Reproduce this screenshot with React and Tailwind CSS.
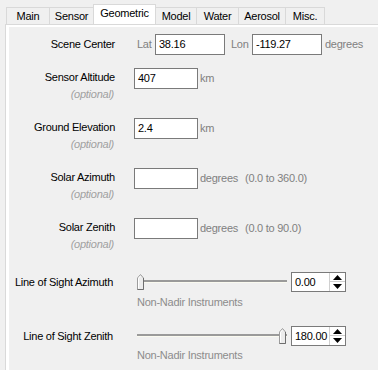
import React from "react";

const TABS = [
  { name: "Main", w: 43 },
  { name: "Sensor", w: 44 },
  { name: "Geometric", w: 63, active: true },
  { name: "Model", w: 40 },
  { name: "Water", w: 42 },
  { name: "Aerosol", w: 47 },
  { name: "Misc.", w: 40 },
];

function Thumb() {
  return (
    <svg width="8" height="16" viewBox="0 0 8 16">
      <path d="M0.5 4 L3.5 0.5 L6.5 4 L6.5 15.5 L0.5 15.5 Z" fill="#ececec" stroke="#9c9c9c" />
      <path d="M6.5 4 L6.5 15.5 L0.5 15.5" fill="none" stroke="#6e6e6e" />
      <path d="M1.5 14.5 L1.5 4.3 L3.5 2" fill="none" stroke="#ffffff" />
    </svg>
  );
}

function Slider({ pos }) {
  return (
    <div className="relative w-[150px] h-[16px]">
      <div className="absolute left-0 right-0 top-[6px] h-[3px] border-t-2 border-[#9a9a9a] border-b border-b-[#fafaf0]" />
      <div className="absolute top-0" style={{ left: pos }}>
        <Thumb />
      </div>
    </div>
  );
}

function Spinner({ value }) {
  return (
    <div className="flex w-[55px] h-[20px] border border-[#7a7a7a] bg-white">
      <div className="flex-1 pl-[3px] leading-[18px] text-black">{value}</div>
      <div className="w-[16px] flex flex-col border-l border-[#d0d0d0]">
        <div className="h-[9px] flex items-center justify-center border-b border-[#d0d0d0]">
          <svg width="9" height="5" viewBox="0 0 9 5">
            <path d="M0 5 L4.5 0 L9 5 Z" fill="#000" />
          </svg>
        </div>
        <div className="flex-1 flex items-center justify-center">
          <svg width="9" height="5" viewBox="0 0 9 5">
            <path d="M0 0 L9 0 L4.5 5 Z" fill="#000" />
          </svg>
        </div>
      </div>
    </div>
  );
}

function Field({ label, value, unit, range }) {
  return (
    <div className="flex h-[50px]">
      <div className="w-[106px] text-right">
        <div className="pt-[2px] leading-[15px] text-black">{label}</div>
        <div className="mt-[2px] leading-[14px] italic text-[#a0a0a0] pr-[1px]">(optional)</div>
      </div>
      <div className="ml-[19px] w-[64px] h-[21px] border border-[#7a7a7a] bg-white pl-[3px] leading-[19px] text-black">
        {value}
      </div>
      <div className="ml-[2px] h-[21px] flex items-center text-[#808080]">
        {unit}
        {range && <span className="ml-[7px]">{range}</span>}
      </div>
    </div>
  );
}

export default function App() {
  return (
    <div
      className="w-[378px] h-[370px] overflow-hidden bg-[#f0f0f0] text-[11px] tracking-[-0.25px]"
      style={{ fontFamily: '"Liberation Sans", Arial, sans-serif' }}
    >
      {/* tab strip */}
      <div className="flex items-end h-[24px] pl-[6px] pt-[4px]">
        {TABS.map((t, i) => (
          <div
            key={t.name}
            style={{ width: t.w }}
            className={`flex items-center justify-center border-t border-l border-[#d9d9d9] text-black ${
              t.active ? "h-[20px] bg-white border-r pb-[3px]" : "h-[17px] bg-[#f0f0f0]"
            } ${i > 0 && TABS[i - 1].active ? "border-l-0" : ""} ${
              i === TABS.length - 1 ? "border-r" : ""
            }`}
          >
            {t.name}
          </div>
        ))}
      </div>

      {/* tab page */}
      <div className="ml-[5px] h-[346px] border-t border-l border-[#d9d9d9] bg-white pl-[3px] pt-[2px]">
        <div className="h-full bg-[#f0f0f0]">
          <div className="pt-[7px] flex h-[28px] items-center">
            <div className="w-[106px] text-right text-black">Scene Center</div>
            <div className="ml-[22px] w-[18px] text-[#808080]">Lat</div>
            <div className="w-[70px] h-[21px] border border-[#7a7a7a] bg-white pl-[3px] leading-[19px] text-black">
              38.16
            </div>
            <div className="ml-[6px] w-[21px] text-[#808080]">Lon</div>
            <div className="w-[70px] h-[21px] border border-[#7a7a7a] bg-white pl-[3px] leading-[19px] text-black">
              -119.27
            </div>
            <div className="ml-[3px] text-[#808080]">degrees</div>
          </div>

          <div className="mt-[13px]">
            <Field label="Sensor Altitude" value="407" unit="km" />
            <Field label="Ground Elevation" value="2.4" unit="km" />
            <Field label="Solar Azimuth" value="" unit="degrees" range="(0.0 to 360.0)" />
            <Field label="Solar Zenith" value="" unit="degrees" range="(0.0 to 90.0)" />
          </div>

          <div className="mt-[4px] flex items-center h-[20px]">
            <div className="w-[104px] text-right text-black">Line of Sight Azimuth</div>
            <div className="ml-[24px]">
              <Slider pos={0} />
            </div>
            <div className="ml-[4px]">
              <Spinner value="0.00" />
            </div>
          </div>
          <div className="mt-[3px] ml-[128px] leading-[14px] text-[#8c8c8c]">Non-Nadir Instruments</div>

          <div className="mt-[17px] flex items-center h-[20px]">
            <div className="w-[104px] text-right text-black">Line of Sight Zenith</div>
            <div className="ml-[24px]">
              <Slider pos={142} />
            </div>
            <div className="ml-[4px]">
              <Spinner value="180.00" />
            </div>
          </div>
          <div className="mt-[2px] ml-[128px] leading-[14px] text-[#8c8c8c]">Non-Nadir Instruments</div>
        </div>
      </div>
    </div>
  );
}
